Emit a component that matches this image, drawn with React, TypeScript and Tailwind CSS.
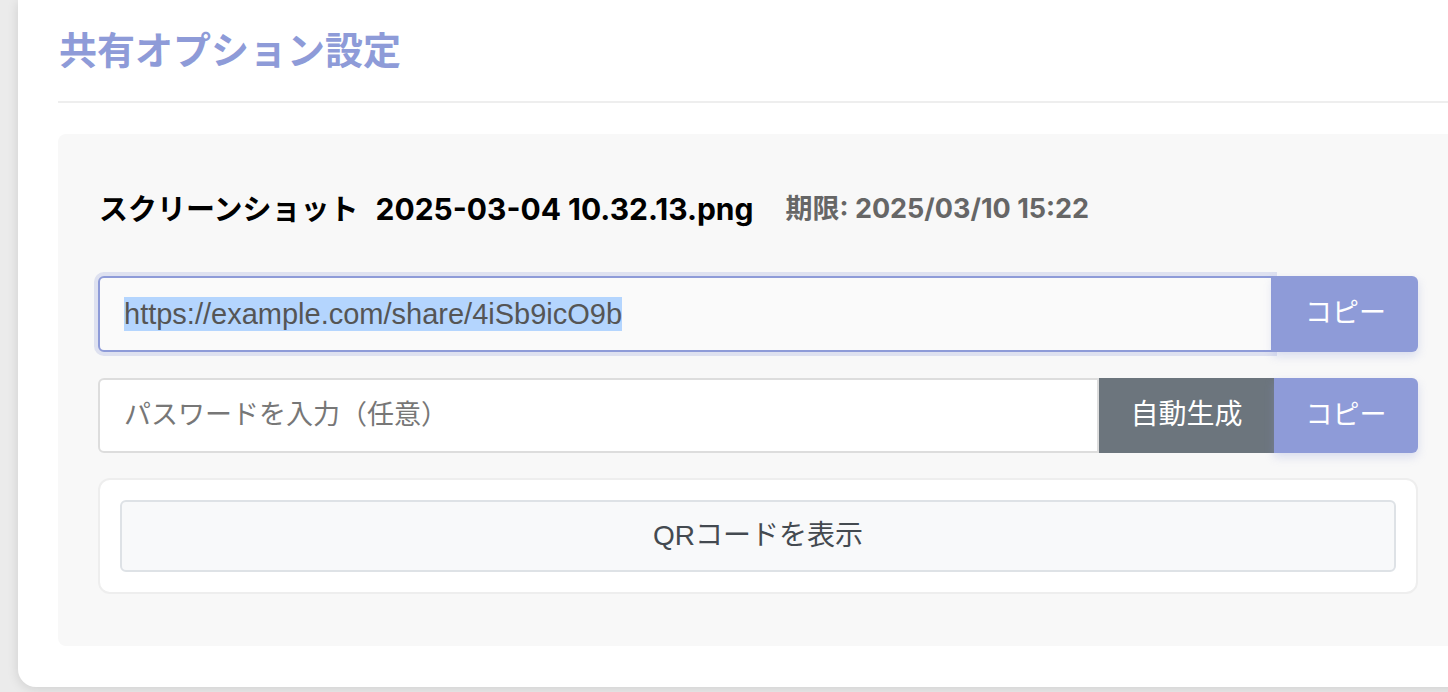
export default function App() {
    const font = { fontFamily: '"Liberation Sans", "Noto Sans CJK JP", sans-serif' };
    const headFont = { fontFamily: 'Inter, "Noto Sans CJK JP", sans-serif' };
    return (
        <div className="h-[692px] w-full overflow-hidden bg-[#ebebeb] pl-[18px]" style={font}>
            <div className="w-[1480px] rounded-bl-[18px] bg-white px-[40px] pt-[29px] pb-[41px] shadow-[0_2px_12px_rgba(0,0,0,0.12)]">
                <h1 className="border-b-2 border-[#eeeeee] pb-[26px] pl-px text-[38px] leading-[1.2] font-bold text-[#8e9bd8]">
                    共有オプション設定
                </h1>

                <div className="mt-[31px] rounded-l-[8px] bg-[#f8f8f8] px-[40px] pt-[41px] pb-[52px]">
                    <div className="flex h-[70px] items-center gap-[32px] pl-px font-bold" style={headFont}>
                        <span className="flex items-center text-black">
                            <span className="text-[29px]">スクリーンショット</span>
                            <span className="ml-[17px] text-[30px]">2025-03-04 10.32.13.png</span>
                        </span>
                        <span className="text-[27px] text-[#666666]">期限: 2025/03/10 15:22</span>
                    </div>

                    <div className="mt-[31px] flex h-[76px]">
                        <div className="flex flex-1 items-center rounded-l-[6px] border-2 border-[#8e9bd8] bg-[#fafafa] pl-[24px] shadow-[0_0_0_4px_rgba(143,156,216,0.25)]">
                            <span className="bg-[#b4d5fe] text-[29px] leading-[34px] text-[#555555]">https://example.com/share/4iSb9icO9b</span>
                        </div>
                        <button className="w-[145px] rounded-r-[6px] bg-[#8e9bd8] text-[27px] text-white shadow-[0_4px_10px_rgba(143,156,216,0.3)]">
                            コピー
                        </button>
                    </div>

                    <div className="mt-[26px] flex h-[75px]">
                        <div className="flex flex-1 items-center rounded-l-[6px] border-2 border-[#dddddd] bg-white pl-[24px]">
                            <span className="text-[27px] text-[#777777]">パスワードを入力（任意）</span>
                        </div>
                        <button className="w-[175px] bg-[#6c757d] text-[28px] text-white">自動生成</button>
                        <button className="w-[144px] rounded-r-[6px] bg-[#8e9bd8] text-[27px] text-white shadow-[0_4px_10px_rgba(143,156,216,0.3)]">
                            コピー
                        </button>
                    </div>

                    <div className="mt-[25px] rounded-[12px] border-2 border-[#eeeeee] bg-white p-[20px]">
                        <button className="h-[72px] w-full rounded-[6px] border-2 border-[#dee2e6] bg-[#f8f9fa] text-[28px] text-[#444a50]">
                            QRコードを表示
                        </button>
                    </div>
                </div>
            </div>
        </div>
    );
}
